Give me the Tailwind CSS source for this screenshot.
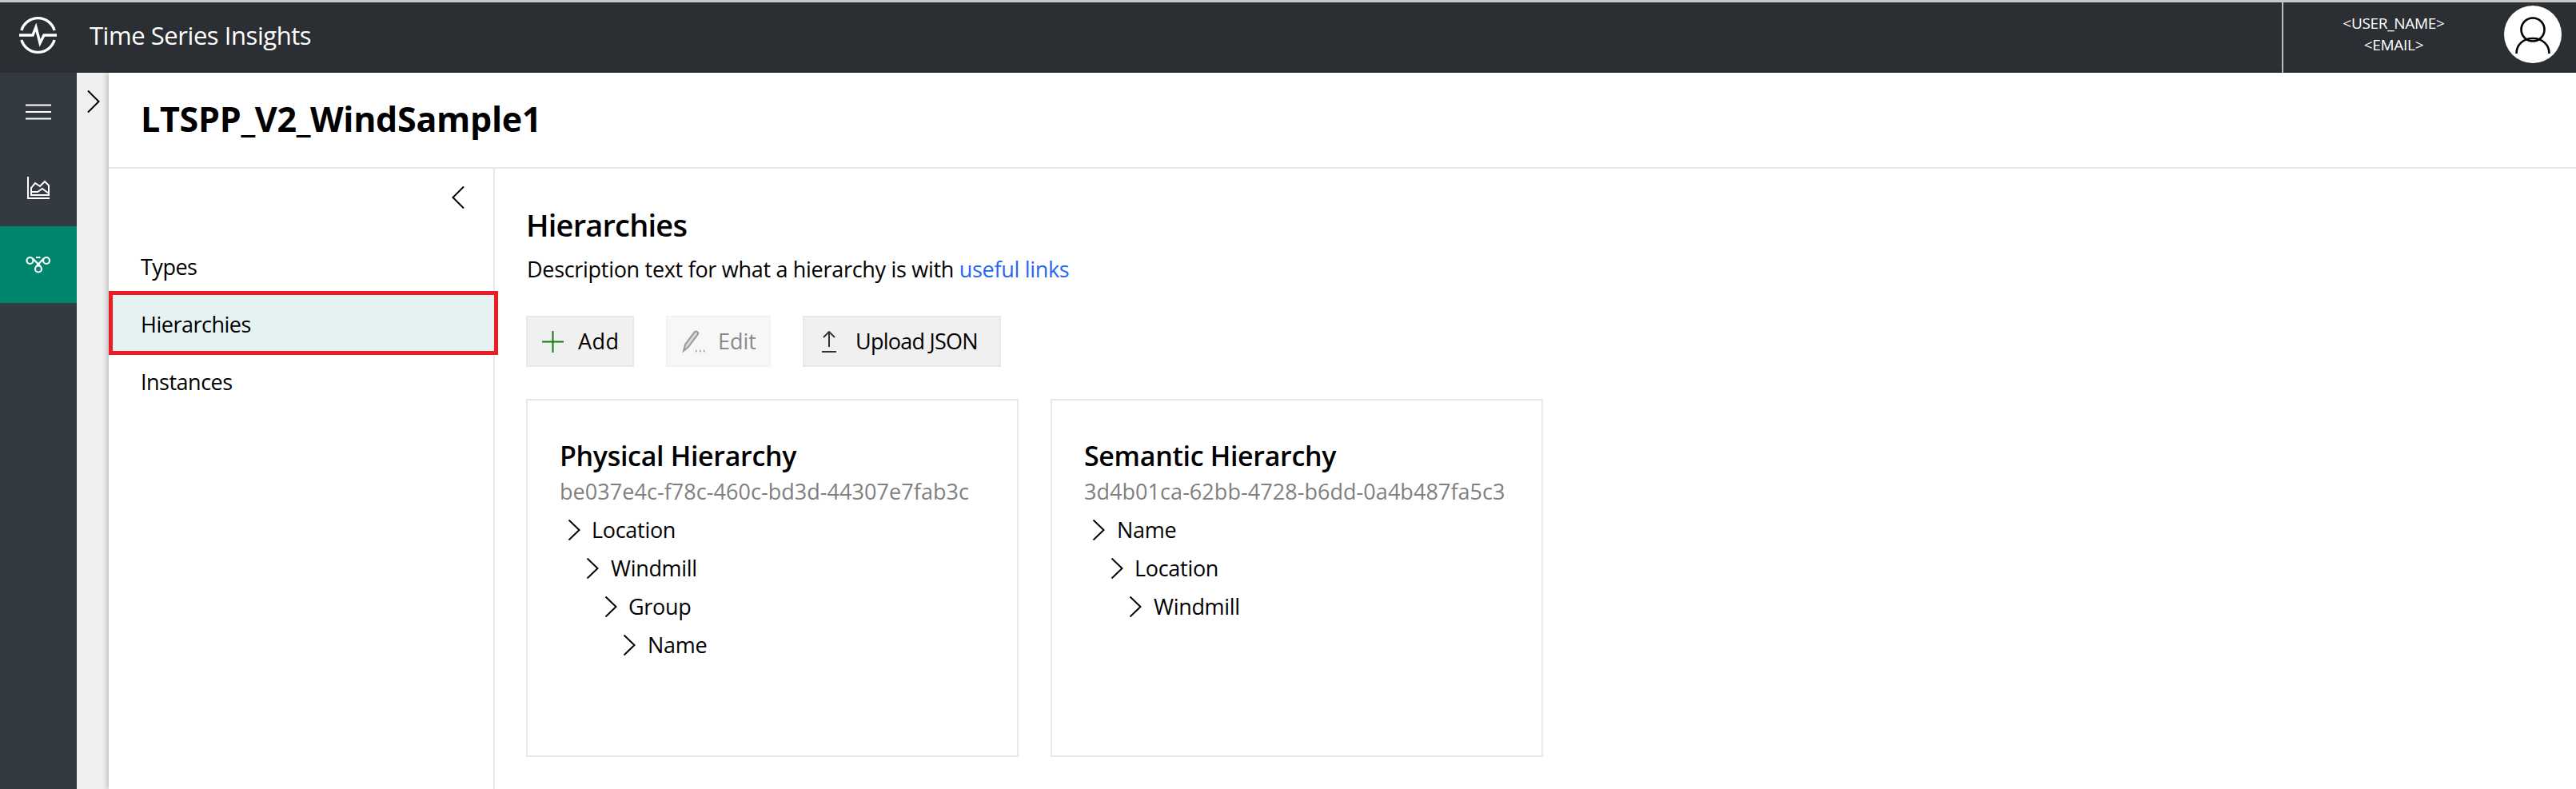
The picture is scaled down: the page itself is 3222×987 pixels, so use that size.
<!DOCTYPE html>
<html lang="en">
  <head>
    <meta charset="UTF-8" />
    <title>Time Series Insights</title>
    <script src="https://cdn.jsdelivr.net/npm/@tailwindcss/browser@4"></script>
  </head>
  <body class="w-[3222px] h-[987px] overflow-hidden flex flex-col bg-white text-black font-['Open_Sans',sans-serif]">
    <!-- Top bar -->
    <header class="h-[91px] shrink-0 flex items-center bg-[#2b2f33] border-t-[3px] border-[#c8c8c8] text-white">
      <svg class="ml-[24px] mb-[6px] w-[47px] h-[48px]" viewBox="0 0 47 48" fill="none" stroke="white" stroke-width="3.4">
        <path d="M2.9 18A21.5 21.5 0 0 1 44.1 18" />
        <path d="M2.9 30A21.5 21.5 0 0 0 44.1 30" />
        <path d="M0 24H17L21 14L26 34L31 24H47" stroke-linejoin="miter" />
      </svg>
      <span class="ml-[41px] mb-[5px] text-[31px] tracking-[-0.45px]">Time Series Insights</span>
      <div class="ml-auto h-full w-[368px] flex items-center border-l-2 border-[#bdbdbd]">
        <div class="w-[276px] mb-[8px] flex flex-col items-center text-[19px] leading-[27px] tracking-[-0.3px]">
          <span>&lt;USER_NAME&gt;</span>
          <span>&lt;EMAIL&gt;</span>
        </div>
        <div class="w-[72px] h-[72px] mb-[8px] rounded-full bg-white flex items-center justify-center">
          <svg class="w-[72px] h-[72px]" viewBox="0 0 72 72" fill="none" stroke="black" stroke-width="2.6">
            <circle cx="36" cy="30" r="14.5" />
            <path d="M15.5 60C15.5 49 24 41 36 41S56.5 49 56.5 60" />
          </svg>
        </div>
      </div>
    </header>

    <div class="flex-1 flex min-h-0">
      <!-- Icon rail -->
      <nav class="w-[96px] shrink-0 bg-[#333a42] flex flex-col">
        <a class="h-[96px] pt-[2px] flex items-center justify-center">
          <svg class="w-[32px] h-[20px]" viewBox="0 0 32 20" fill="none" stroke="white" stroke-width="2">
            <path d="M0 1.5H32M0 10H32M0 18.5H32" />
          </svg>
        </a>
        <a class="h-[96px] flex items-center justify-center">
          <svg class="w-[30px] h-[30px]" viewBox="0 0 30 30" fill="none" stroke="white" stroke-width="2">
            <path d="M2 1V28H29" />
            <path d="M6 24V15L11 9L17 13L23 7L28 12V24Z" />
            <path d="M6 20H14L20 16L28 22" />
          </svg>
        </a>
        <a class="h-[96px] flex items-center justify-center bg-[#00856f]">
          <svg class="w-[32px] h-[22px]" viewBox="0 0 32 22" fill="none" stroke="white" stroke-width="2.2">
            <circle cx="5.5" cy="6" r="4" />
            <circle cx="26" cy="6" r="4" />
            <circle cx="16" cy="16.5" r="4" />
            <path d="M8.5 3L19 13.5M23 3L13 13.5M13 2H18.5" />
          </svg>
        </a>
      </nav>

      <!-- Collapsed strip -->
      <div class="w-[40px] shrink-0 bg-[#f0f0f0] pt-[22px] pl-[13px]">
        <svg class="w-[16px] h-[28px]" viewBox="0 0 16 28" fill="none" stroke="black" stroke-width="2">
          <path d="M1 0.5L14.5 14L1 27.5" />
        </svg>
      </div>

      <main class="flex-1 flex flex-col min-w-0 shadow-[-3px_0_6px_rgba(0,0,0,0.18)]">
        <div class="h-[120px] shrink-0 flex items-center pl-[40px] pb-[2px] border-b-2 border-[#e8e8e8]">
          <h1 class="text-[43px] font-bold tracking-[-0.3px]">LTSPP_V2_WindSample1</h1>
        </div>

        <div class="flex-1 flex min-h-0">
          <!-- Left panel -->
          <aside class="w-[483px] shrink-0 border-r-2 border-[#e8e8e8]">
            <div class="h-[85px] flex justify-end pt-[22px] pr-[36px]">
              <svg class="w-[16px] h-[28px]" viewBox="0 0 16 28" fill="none" stroke="black" stroke-width="2">
                <path d="M15 0.5L1.5 14L15 27.5" />
              </svg>
            </div>
            <ul class="text-[27px] tracking-[-0.5px]">
              <li class="h-[72px] pt-[4px] flex items-center pl-[40px]">Types</li>
              <li class="relative h-[72px] pt-[4px] flex items-center pl-[40px] bg-[#e6f2f2] -mr-[2px]">
                Hierarchies
                <span class="absolute -top-[4px] -bottom-[4px] left-0 -right-[4px] border-[5px] border-[#ed1c24]"></span>
              </li>
              <li class="h-[72px] pt-[4px] flex items-center pl-[40px]">Instances</li>
            </ul>
          </aside>

          <!-- Content -->
          <section class="flex-1 min-w-0 pl-[40px] pt-[44px]">
            <h2 class="ml-[-1px] text-[38px] leading-[52px] font-semibold tracking-[-0.8px]">Hierarchies</h2>
            <p class="mt-[10px] text-[27px] leading-[40px] tracking-[-0.3px]">
              Description text for what a hierarchy is with
              <a class="text-[#2468f2]">useful links</a>
            </p>

            <div class="mt-[38px] ml-[-1px] flex gap-[40px] text-[27px] tracking-[-0.6px]">
              <button class="h-[64px] w-[135px] flex items-center pl-[18px] bg-[#f0f0f0] border-2 border-[#e8e8e8]">
                <svg class="w-[27px] h-[27px]" viewBox="0 0 27 27" fill="none" stroke="#107c10" stroke-width="2">
                  <path d="M13.5 0V27M0 13.5H27" />
                </svg>
                <span class="ml-[18px] tracking-[0.4px]">Add</span>
              </button>
              <button class="h-[64px] w-[131px] flex items-center pl-[18px] bg-[#f7f7f7] border-2 border-[#f2f2f2] text-[#8a8a8a]">
                <svg class="w-[30px] h-[28px]" viewBox="0 0 30 28" fill="none" stroke="#999999" stroke-width="2">
                  <path d="M2 26L4 18L16 2C18 0.5 21 2.5 20 5L8 21Z" fill="#999999" fill-opacity="0.35" />
                  <path d="M17 26H18.5M22 26H23.5M27 26H28.5" stroke-width="2.5" />
                </svg>
                <span class="ml-[15px] tracking-[0px]">Edit</span>
              </button>
              <button class="h-[64px] w-[248px] flex items-center pl-[21px] bg-[#f0f0f0] border-2 border-[#e8e8e8]">
                <svg class="w-[20px] h-[27px]" viewBox="0 0 20 27" fill="none" stroke="#333333" stroke-width="2">
                  <path d="M10 1V20M3 8L10 1L17 8" />
                  <path d="M1 26H19" />
                </svg>
                <span class="ml-[23px] tracking-[-0.75px]">Upload JSON</span>
              </button>
            </div>

            <div class="mt-[40px] ml-[-1px] flex gap-[40px]">
              <article class="w-[616px] h-[448px] border-2 border-[#e8e8e8] pl-[40px] pt-[45px]">
                <h3 class="text-[34px] leading-[48px] font-semibold tracking-[-0.33px]">Physical Hierarchy</h3>
                <p class="mt-[1px] text-[27px] leading-[40px] text-[#808080] tracking-[0.05px]">be037e4c-f78c-460c-bd3d-44307e7fab3c</p>
                <ul class="mt-[4px] text-[27px] tracking-[-0.3px]">
                  <li class="h-[48px] flex items-center pl-[10px]">
                    <svg class="w-[17px] h-[26px]" viewBox="0 0 17 26" fill="none" stroke="black" stroke-width="2"><path d="M1.5 0.5L14.5 13L1.5 25.5" /></svg>
                    <span class="ml-[13px]">Location</span>
                  </li>
                  <li class="h-[48px] flex items-center pl-[33px]">
                    <svg class="w-[17px] h-[26px]" viewBox="0 0 17 26" fill="none" stroke="black" stroke-width="2"><path d="M1.5 0.5L14.5 13L1.5 25.5" /></svg>
                    <span class="ml-[14px]">Windmill</span>
                  </li>
                  <li class="h-[48px] flex items-center pl-[56px]">
                    <svg class="w-[17px] h-[26px]" viewBox="0 0 17 26" fill="none" stroke="black" stroke-width="2"><path d="M1.5 0.5L14.5 13L1.5 25.5" /></svg>
                    <span class="ml-[13px]">Group</span>
                  </li>
                  <li class="h-[48px] flex items-center pl-[79px]">
                    <svg class="w-[17px] h-[26px]" viewBox="0 0 17 26" fill="none" stroke="black" stroke-width="2"><path d="M1.5 0.5L14.5 13L1.5 25.5" /></svg>
                    <span class="ml-[14px]">Name</span>
                  </li>
                </ul>
              </article>
              <article class="w-[616px] h-[448px] border-2 border-[#e8e8e8] pl-[40px] pt-[45px]">
                <h3 class="text-[34px] leading-[48px] font-semibold tracking-[-0.33px]">Semantic Hierarchy</h3>
                <p class="mt-[1px] text-[27px] leading-[40px] text-[#808080] tracking-[0.05px]">3d4b01ca-62bb-4728-b6dd-0a4b487fa5c3</p>
                <ul class="mt-[4px] text-[27px] tracking-[-0.3px]">
                  <li class="h-[48px] flex items-center pl-[10px]">
                    <svg class="w-[17px] h-[26px]" viewBox="0 0 17 26" fill="none" stroke="black" stroke-width="2"><path d="M1.5 0.5L14.5 13L1.5 25.5" /></svg>
                    <span class="ml-[14px]">Name</span>
                  </li>
                  <li class="h-[48px] flex items-center pl-[33px]">
                    <svg class="w-[17px] h-[26px]" viewBox="0 0 17 26" fill="none" stroke="black" stroke-width="2"><path d="M1.5 0.5L14.5 13L1.5 25.5" /></svg>
                    <span class="ml-[13px]">Location</span>
                  </li>
                  <li class="h-[48px] flex items-center pl-[56px]">
                    <svg class="w-[17px] h-[26px]" viewBox="0 0 17 26" fill="none" stroke="black" stroke-width="2"><path d="M1.5 0.5L14.5 13L1.5 25.5" /></svg>
                    <span class="ml-[14px]">Windmill</span>
                  </li>
                </ul>
              </article>
            </div>
          </section>
        </div>
      </main>
    </div>
  </body>
</html>
